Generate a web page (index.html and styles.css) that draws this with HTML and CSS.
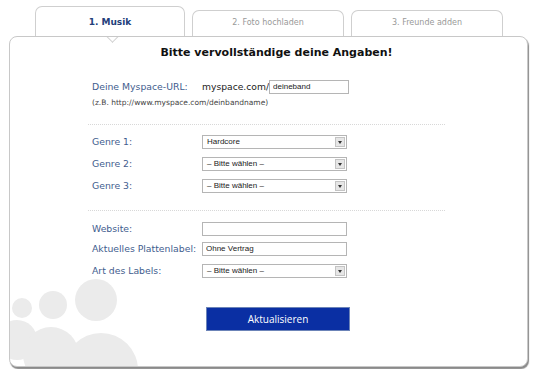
FILE: index.html
```html
<!DOCTYPE html>
<html lang="de">
<head>
    <meta charset="UTF-8">
    <title>Myspace - Musik</title>
    <link rel="stylesheet" href="styles.css">
</head>
<body>
    <div class="tabs">
        <div class="tab active">1. Musik</div>
        <div class="tab">2. Foto hochladen</div>
        <div class="tab">3. Freunde adden</div>
    </div>
    <div class="panel">
        <div class="notch"></div>
        <svg class="bubbles" width="140" height="110" viewBox="0 0 140 110">
            <circle cx="12" cy="52" r="10" fill="#ebebeb"/>
            <circle cx="43" cy="49" r="14" fill="#ebebeb"/>
            <circle cx="86" cy="44" r="21" fill="#ebebeb"/>
            <circle cx="7" cy="84" r="20" fill="#ebebeb"/>
            <circle cx="41" cy="99" r="28" fill="#ebebeb"/>
            <circle cx="91" cy="114" r="37" fill="#ebebeb"/>
        </svg>

        <h2>Bitte vervollständige deine Angaben!</h2>

        <div class="row">
            <label>Deine Myspace-URL:</label>
            <span class="prefix">myspace.com/</span>
            <input class="short" type="text" value="deineband">
        </div>
        <div class="hint">(z.B. http://www.myspace.com/deinbandname)</div>

        <div class="sep first"></div>

        <div class="row">
            <label>Genre 1:</label>
            <div class="select">Hardcore<span class="arrow"></span></div>
        </div>
        <div class="row">
            <label>Genre 2:</label>
            <div class="select">– Bitte wählen –<span class="arrow"></span></div>
        </div>
        <div class="row">
            <label>Genre 3:</label>
            <div class="select">– Bitte wählen –<span class="arrow"></span></div>
        </div>

        <div class="sep"></div>

        <div class="row">
            <label>Website:</label>
            <input type="text" value="">
        </div>
        <div class="row tight">
            <label>Aktuelles Plattenlabel:</label>
            <input type="text" value="Ohne Vertrag">
        </div>
        <div class="row">
            <label>Art des Labels:</label>
            <div class="select">– Bitte wählen –<span class="arrow"></span></div>
        </div>

        <div class="actions">
            <button type="button">Aktualisieren</button>
        </div>
    </div>
</body>
</html>
```

FILE: styles.css
```css
body {
    margin: 0;
    background: #ffffff;
    font-family: "DejaVu Sans", Verdana, sans-serif;
    width: 540px;
    height: 369px;
    overflow: hidden;
}
.tabs {
    display: flex;
    align-items: flex-end;
    gap: 7px;
    padding-left: 35px;
    padding-top: 6px;
    height: 30px;
}
.tab {
    width: 150px;
    height: 25px;
    border: 1px solid #cfcfcf;
    border-bottom: none;
    border-radius: 7px 7px 0 0;
    background: #ffffff;
    color: #999;
    font-size: 8px;
    text-align: center;
    line-height: 24px;
}
.tab.active {
    width: 148px;
    height: 29px;
    color: #23407a;
    font-weight: bold;
    font-size: 9px;
    line-height: 31px;
}
.panel {
    position: relative;
    margin-left: 9px;
    width: 517px;
    height: 329px;
    border: 1px solid #c8c8c8;
    border-radius: 8px;
    box-shadow: 1px 2px 1px #8a8a8a;
    background: #ffffff;
    overflow: hidden;
}
.notch {
    position: absolute;
    left: 98px;
    top: -1px;
    width: 8px;
    height: 8px;
    border-right: 1px solid #d0d0d0;
    border-bottom: 1px solid #d0d0d0;
    background: #ffffff;
    transform: rotate(45deg);
    margin-top: -4px;
}
.bubbles {
    position: absolute;
    left: 0;
    bottom: 0;
}
h2 {
    position: relative;
    margin: 7px 0 0 16px;
    text-align: center;
    font-size: 11px;
    line-height: 18px;
    color: #111;
}
.row {
    position: relative;
    display: flex;
    align-items: center;
    margin-left: 82px;
    height: 15px;
    margin-top: 7px;
}
.row.tight {
    margin-top: 5px;
}
h2 + .row {
    margin-top: 17px;
}
label {
    width: 110px;
    flex: none;
    font-size: 9.3px;
    color: #3f5d8e;
}
.prefix {
    width: 67px;
    font-size: 9.2px;
    color: #222;
}
input {
    box-sizing: border-box;
    width: 145px;
    height: 14px;
    margin: 0;
    padding: 0 3px;
    border: 1px solid #b5b5b5;
    font-family: "Liberation Sans", Arial, sans-serif;
    font-size: 8px;
    color: #222;
}
input.short {
    width: 80px;
}
.hint {
    margin: 4px 0 0 82px;
    font-size: 7.5px;
    color: #444;
}
.sep {
    margin: 17px 82px 0 78px;
    padding-bottom: 3px;
    border-top: 1px dotted #d8d8d8;
}
.sep.first {
    padding-bottom: 2px;
}
.select {
    position: relative;
    box-sizing: border-box;
    width: 145px;
    height: 14px;
    padding: 0 4px;
    border: 1px solid #b5b5b5;
    font-family: "Liberation Sans", Arial, sans-serif;
    font-size: 8px;
    line-height: 12px;
    color: #222;
}
.arrow {
    position: absolute;
    right: 1px;
    top: 1px;
    width: 10px;
    height: 10px;
    background: #e6e6e6;
    border: 1px solid #c4c4c4;
    box-sizing: border-box;
}
.arrow::after {
    content: "";
    position: absolute;
    left: 2px;
    top: 3px;
    border-left: 2px solid transparent;
    border-right: 2px solid transparent;
    border-top: 3px solid #333;
}
.actions {
    position: relative;
    margin: 29px 0 0 196px;
}
button {
    width: 144px;
    height: 24px;
    background: #0a2fa3;
    border: 1px solid #6c84b8;
    color: #ffffff;
    font-family: "Open Sans", sans-serif;
    font-size: 10px;
}
```
